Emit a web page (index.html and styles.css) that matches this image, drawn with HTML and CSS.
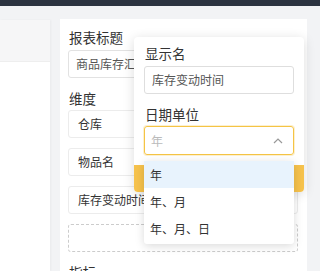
FILE: index.html
```html
<!DOCTYPE html>
<html lang="zh-CN">
<head>
  <meta charset="UTF-8">
  <title>报表设计</title>
  <link rel="stylesheet" href="styles.css">
</head>
<body>
  <!-- top bar -->
  <div class="topbar"></div>

  <div class="workspace">
    <!-- left list panel -->
    <aside class="side-panel">
      <div class="side-head"></div>
      <div class="side-body"></div>
    </aside>

    <!-- report config card -->
    <section class="config-card">
      <div class="field-label">报表标题</div>
      <div class="text-input">商品库存汇总</div>

      <div class="field-label section-gap">维度</div>
      <div class="dim-list">
        <div class="dim-item">仓库</div>
        <div class="dim-item">物品名</div>
        <div class="dim-item">库存变动时间</div>
        <div class="dim-drop"></div>
      </div>

      <div class="field-label section-gap">指标</div>

      <!-- POPOVER -->
      <div class="popover">
        <div class="field-label">显示名</div>
        <div class="text-input">库存变动时间</div>
        <div class="field-label section-gap">日期单位</div>
        <div class="select is-open">
          <span class="placeholder">年</span>
          <svg class="chevron" width="10" height="6" viewBox="0 0 10 6">
            <path d="M1 5 L5 1 L9 5" fill="none" stroke="#999" stroke-width="1.2"/>
          </svg>
        </div>
        <button class="ok-button"></button>

        <!-- dropdown options -->
        <ul class="dropdown">
          <li class="option active">年</li>
          <li class="option">年、月</li>
          <li class="option">年、月、日</li>
        </ul>
      </div>
    </section>
  </div>
</body>
</html>
```

FILE: styles.css
```css
* {
  margin: 0;
  padding: 0;
  box-sizing: border-box;
}
body {
  font-family: "Noto Sans CJK SC", "Noto Sans", sans-serif;
  background-color: #f2f3f5;
  color: #333;
  height: 271px;
  overflow: hidden;
}
.topbar {
  height: 6px;
  background-color: #2c3340;
}
.workspace {
  display: flex;
  gap: 10px;
  padding-top: 13px;
  height: 265px;
}
/* Left panel */
.side-panel {
  width: 50px;
  margin-top: 1px;
  background-color: #fff;
  display: flex;
  flex-direction: column;
  box-shadow: 1px 0 2px rgba(0,0,0,0.04);
}
.side-head {
  height: 42px;
  background-color: #f6f6f7;
  border-bottom: 1px solid #eee;
}
.side-body {
  flex: 1;
}
/* Config card */
.config-card {
  position: relative;
  width: 247px;
  background-color: #fff;
  padding: 8px 9px 0 8px;
}
.field-label {
  font-size: 13.5px;
  line-height: 20px;
  padding-left: 1px;
  color: #333;
}
.section-gap {
  margin-top: 10px;
}
.text-input {
  margin-top: 3px;
  height: 28px;
  border: 1px solid #e2e2e2;
  border-radius: 3px;
  padding-left: 7px;
  font-size: 12px;
  line-height: 26px;
  color: #555;
  white-space: nowrap;
  overflow: hidden;
}
.dim-list {
  margin-top: 2px;
  display: flex;
  flex-direction: column;
  gap: 10px;
}
.dim-item {
  height: 28px;
  border: 1px solid #ececec;
  border-radius: 3px;
  padding-left: 9px;
  font-size: 12px;
  line-height: 26px;
  color: #333;
}
.dim-drop {
  height: 28px;
  border: 1px dashed #ccc;
  border-radius: 3px;
}
/* POPOVER */
.popover {
  position: absolute;
  left: 74px;
  top: 18px;
  width: 170px;
  background-color: #fff;
  border-radius: 4px;
  box-shadow: 0 2px 12px rgba(0,0,0,0.14);
  padding: 6px 10px 0;
}
.popover .text-input {
  color: #555;
  border-color: #dedede;
}
.select {
  margin-top: 2px;
  height: 29px;
  border: 1px solid #f5c445;
  border-radius: 3px;
  box-shadow: 0 0 0 1px rgba(245,196,69,0.25);
  padding: 0 10px 0 6px;
  display: flex;
  align-items: center;
  justify-content: space-between;
  font-size: 12px;
}
.placeholder {
  color: #bbb;
}
.ok-button {
  display: block;
  margin: 10px -10px 0;
  width: calc(100% + 20px);
  height: 27px;
  border: none;
  border-radius: 0 0 4px 4px;
  background-color: #f6c24c;
}
.dropdown {
  position: absolute;
  left: 10px;
  top: 124px;
  width: 150px;
  list-style: none;
  background-color: #fff;
  border-radius: 3px;
  box-shadow: 0 2px 10px rgba(0,0,0,0.15);
  padding-bottom: 2px;
}
.option {
  height: 27px;
  line-height: 27px;
  padding-left: 6px;
  font-size: 12px;
  color: #333;
}
.option.active {
  background-color: #e8f3fd;
}
```
